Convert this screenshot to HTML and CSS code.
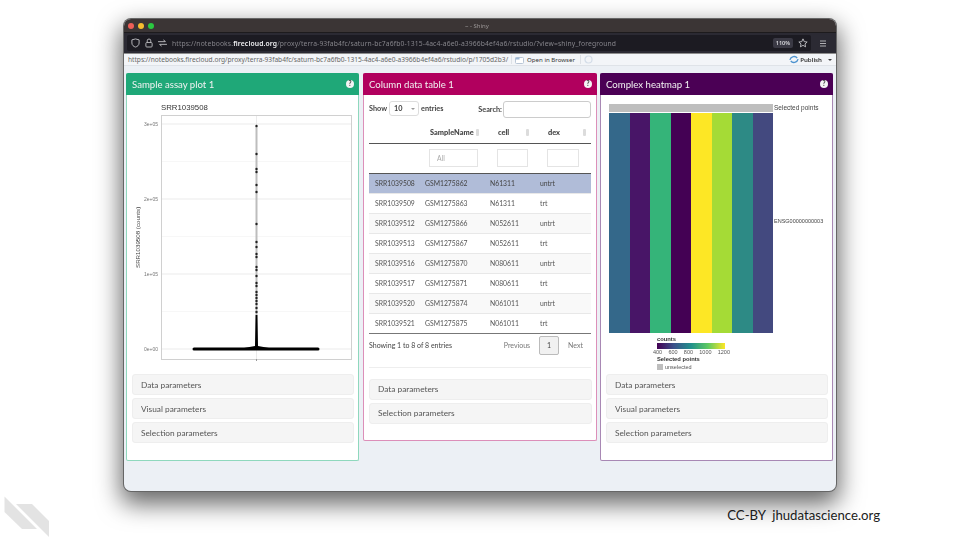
FILE: index.html
```html
<!DOCTYPE html>
<html lang="en">
<head>
    <meta charset="UTF-8">
    <meta name="viewport" content="width=device-width, initial-scale=1.0">
    <title>Shiny</title>
    <link rel="stylesheet" href="styles.css">
</head>
<body>
    <div class="window">
        <div class="titlebar">
            <span class="light red"></span>
            <span class="light yellow"></span>
            <span class="light green"></span>
            <span class="window-title">~ - Shiny</span>
        </div>
        <div class="urlbar">
            <div class="url-field">
                <svg class="nav-icon" width="9" height="10" viewBox="0 0 10 11"><path d="M5 1 L9 2 V5.5 C9 8 7 9.500 5 10 C3 9.500 1 8 1 5.500 V2 Z" fill="none" stroke="#c4c4c8" stroke-width="1"/></svg>
                <svg class="nav-icon" width="8" height="10" viewBox="0 0 9 11"><rect x="1" y="5" width="7" height="5" rx="1" fill="none" stroke="#c4c4c8"/><path d="M2.500 5 V3 A2 2 0 0 1 6.500 3 V5" fill="none" stroke="#c4c4c8"/></svg>
                <svg class="nav-icon" width="9" height="8" viewBox="0 0 10 9"><path d="M0 3 H8 M6 1 L8.500 3 M10 6 H2 M4 8 L1.500 6" fill="none" stroke="#c4c4c8"/></svg>
                <span class="url-text">https://notebooks.<b>firecloud.org</b>/proxy/terra-93fab4fc/saturn-bc7a6fb0-1315-4ac4-a6e0-a3966b4ef4a6/rstudio/?view=shiny_foreground</span>
                <span class="zoom-level">110%</span>
                <svg width="10" height="10" viewBox="0 0 12 12"><path d="M6 1 L7.500 4.400 L11 4.800 L8.400 7.100 L9.100 10.600 L6 8.800 L2.900 10.600 L3.600 7.100 L1 4.800 L4.500 4.400 Z" fill="none" stroke="#d0d0d4"/></svg>
            </div>
            <svg class="menu-icon" width="8" height="7" viewBox="0 0 8 7"><path d="M1 1 H7 M1 3.500 H7 M1 6 H7" stroke="#b0b0b4" stroke-width="1"/></svg>
        </div>
        <div class="rstudio-bar">
            <span class="rs-url">https://notebooks.firecloud.org/proxy/terra-93fab4fc/saturn-bc7a6fb0-1315-4ac4-a6e0-a3966b4ef4a6/rstudio/p/1705d2b3/</span>
            <span class="rs-sep"></span>
            <svg width="9" height="8" viewBox="0 0 9 8"><rect x="0.500" y="1.500" width="8" height="6" rx="1" fill="#fff" stroke="#b9c6d6"/><rect x="0.500" y="1.500" width="4" height="2" fill="#9db7d4"/></svg>
            <span class="rs-open">Open in Browser</span>
            <span class="rs-sep"></span>
            <svg width="9" height="9" viewBox="0 0 9 9"><circle cx="4.500" cy="4.500" r="3.500" fill="none" stroke="#d4dde8" stroke-width="1.200"/></svg>
            <span class="rs-publish">
                <svg width="10" height="9" viewBox="0 0 11 9"><path d="M1 5 C2 1 7 0 9 3 M10 4 C9 8 4 9 2 6" fill="none" stroke="#4d93cf" stroke-width="1.500"/></svg>
                Publish
                <span class="rs-caret"></span>
            </span>
        </div>

        <div class="content">
            <section class="box box-green">
                <header class="box-header">Sample assay plot 1<span class="help">?</span></header>
                <svg class="plot" width="231" height="274" viewBox="0 0 231 274">
                    <text x="34" y="14" class="plot-title">SRR1039508</text>
                    <rect x="34.500" y="19.500" width="190" height="244" fill="#fff" stroke="#d0d0d0"/>
                    <g stroke="#f2f2f2" stroke-width="0.600">
                        <line x1="35" x2="224" y1="65.500" y2="65.500"/>
                        <line x1="35" x2="224" y1="140.500" y2="140.500"/>
                        <line x1="35" x2="224" y1="215.500" y2="215.500"/>
                    </g>
                    <g stroke="#ebebeb" stroke-width="1">
                        <line x1="35" x2="224" y1="28" y2="28"/>
                        <line x1="35" x2="224" y1="103" y2="103"/>
                        <line x1="35" x2="224" y1="178" y2="178"/>
                        <line x1="35" x2="224" y1="253" y2="253"/>
                    </g>
                    <line x1="129.500" x2="129.500" y1="20" y2="263" stroke="#ebebeb"/>
                    <line x1="129.500" x2="129.500" y1="30" y2="219" stroke="#bdbdbd" stroke-width="2"/>
                    <g fill="#222">
                        <circle cx="129.500" cy="30" r="1.200"/><circle cx="129.500" cy="58" r="1.200"/>
                        <circle cx="129.500" cy="73" r="1.200"/><circle cx="129.500" cy="76" r="1.200"/>
                        <circle cx="129.500" cy="89" r="1.200"/><circle cx="129.500" cy="96" r="1.200"/>
                        <circle cx="129.500" cy="128" r="1.200"/><circle cx="129.500" cy="146" r="1.200"/>
                        <circle cx="129.500" cy="151" r="1.200"/><circle cx="129.500" cy="158" r="1.200"/>
                        <circle cx="129.500" cy="161" r="1.200"/><circle cx="129.500" cy="171" r="1.200"/>
                        <circle cx="129.500" cy="174" r="1.200"/><circle cx="129.500" cy="180" r="1.200"/>
                        <circle cx="129.500" cy="187" r="1.200"/><circle cx="129.500" cy="190" r="1.200"/>
                        <circle cx="129.500" cy="196" r="1.200"/><circle cx="129.500" cy="199" r="1.200"/>
                        <circle cx="129.500" cy="202" r="1.200"/><circle cx="129.500" cy="205" r="1.200"/>
                        <circle cx="129.500" cy="208" r="1.200"/><circle cx="129.500" cy="212" r="1.200"/>
                        <circle cx="129.500" cy="216" r="1.200"/>
                    </g>
                    <path d="M128.500 219 H130.500 L131 250 L142 252 H117 L128 250 Z" fill="#000"/>
                    <line x1="67" x2="191" y1="253" y2="253" stroke="#000" stroke-width="3" stroke-linecap="round"/>
                    <line x1="129.500" x2="129.500" y1="263" y2="265" stroke="#999"/>
                    <g class="tick-label" text-anchor="end">
                        <text x="31" y="30">3e+05</text>
                        <text x="31" y="105">2e+05</text>
                        <text x="31" y="180">1e+05</text>
                        <text x="31" y="255">0e+00</text>
                    </g>
                    <text class="axis-label" transform="translate(13 172) rotate(-90)">SRR1039508 (counts)</text>
                </svg>
                <div class="accordion">
                    <div class="acc-item">Data parameters</div>
                    <div class="acc-item">Visual parameters</div>
                    <div class="acc-item">Selection parameters</div>
                </div>
            </section>

            <section class="box box-pink">
                <header class="box-header">Column data table 1<span class="help">?</span></header>
                <div class="table-wrap">
                    <div class="table-top">
                        <span class="length">Show <span class="select-box">10<i></i></span> entries</span>
                        <span class="search">Search:<span class="search-input"></span></span>
                    </div>
                    <table class="data-table">
                        <thead>
                            <tr class="head-row">
                                <th></th>
                                <th>SampleName<i class="sort"></i></th>
                                <th>cell<i class="sort"></i></th>
                                <th>dex<i class="sort"></i></th>
                            </tr>
                            <tr class="filter-row">
                                <td></td>
                                <td><span class="filter f-sample">All</span></td>
                                <td><span class="filter f-cell"></span></td>
                                <td><span class="filter f-dex"></span></td>
                            </tr>
                        </thead>
                        <tbody>
                            <tr class="selected"><td>SRR1039508</td><td>GSM1275862</td><td>N61311</td><td>untrt</td></tr>
                            <tr><td>SRR1039509</td><td>GSM1275863</td><td>N61311</td><td>trt</td></tr>
                            <tr class="odd"><td>SRR1039512</td><td>GSM1275866</td><td>N052611</td><td>untrt</td></tr>
                            <tr><td>SRR1039513</td><td>GSM1275867</td><td>N052611</td><td>trt</td></tr>
                            <tr class="odd"><td>SRR1039516</td><td>GSM1275870</td><td>N080611</td><td>untrt</td></tr>
                            <tr><td>SRR1039517</td><td>GSM1275871</td><td>N080611</td><td>trt</td></tr>
                            <tr class="odd"><td>SRR1039520</td><td>GSM1275874</td><td>N061011</td><td>untrt</td></tr>
                            <tr><td>SRR1039521</td><td>GSM1275875</td><td>N061011</td><td>trt</td></tr>
                        </tbody>
                    </table>
                    <div class="table-foot">
                        <span class="info">Showing 1 to 8 of 8 entries</span>
                        <span class="pager">
                            <span>Previous</span>
                            <span class="page-current">1</span>
                            <span>Next</span>
                        </span>
                    </div>
                    <div class="rule"></div>
                </div>
                <div class="accordion accordion-table">
                    <div class="acc-item">Data parameters</div>
                    <div class="acc-item">Selection parameters</div>
                </div>
            </section>

            <section class="box box-purple">
                <header class="box-header">Complex heatmap 1<span class="help">?</span></header>
                <div class="heatmap">
                    <div class="heat-main">
                        <div class="selected-strip"></div>
                        <div class="heat-cols">
                            <span class="c1"></span><span class="c2"></span><span class="c3"></span><span class="c4"></span>
                            <span class="c5"></span><span class="c6"></span><span class="c7"></span><span class="c8"></span>
                        </div>
                    </div>
                    <div class="heat-labels">
                        <span>Selected points</span>
                        <span class="gene">ENSG00000000003</span>
                    </div>
                </div>
                <div class="legend">
                    <div class="legend-title">counts</div>
                    <div class="colorbar"></div>
                    <div class="legend-ticks"><span>400</span><span>600</span><span>800</span><span>1000</span><span>1200</span></div>
                    <div class="legend-title">Selected points</div>
                    <div class="legend-key"><i></i>unselected</div>
                </div>
                <div class="accordion accordion-heat">
                    <div class="acc-item">Data parameters</div>
                    <div class="acc-item">Visual parameters</div>
                    <div class="acc-item">Selection parameters</div>
                </div>
            </section>
        </div>
    </div>

    <footer class="credits">
        <svg width="46" height="42" viewBox="0 0 46 42">
            <path d="M0.500 0.500 V16 L18 33 H33 Z" fill="#e3e3e3"/>
            <path d="M12 8 H28 L45 25 V41 Z" fill="#e3e3e3"/>
        </svg>
        <span class="credit-text">CC-BY&nbsp; jhudatascience.org</span>
    </footer>
</body>
</html>
```

FILE: styles.css
```css
body {
    margin: 0;
    background-color: #fff;
    font-family: 'Lato', sans-serif;
    overflow: hidden;
}
.window {
    margin: 19px 0 0 124px;
    width: 712px;
    height: 472px;
    display: flex;
    flex-direction: column;
    border-radius: 7px;
    overflow: hidden;
    background-color: #ecf0f5;
    box-shadow: 0 0 0 1px #666, 0 10px 24px 3px rgba(0, 0, 0, 0.6);
    filter: blur(0.35px);
}
.credits {
    display: flex;
    justify-content: space-between;
    align-items: center;
    padding: 5px 80px 0 4px;
}
.credit-text {
    font-family: 'Lato', sans-serif;
    font-size: 13.200px;
    color: #222;
    margin-top: -4px;
}

/* window chrome */
.titlebar {
    height: 13px;
    flex: none;
    display: flex;
    align-items: center;
    gap: 4px;
    padding-left: 4px;
    background-color: #3b3535;
    border-bottom: 1px solid #1d1b1d;
    position: relative;
}
.light {
    width: 6px;
    height: 6px;
    border-radius: 50%;
}
.red { background-color: #ee5f58; }
.yellow { background-color: #f6bd2f; }
.green { background-color: #2ac840; }
.window-title {
    position: absolute;
    left: 341px;
    font-family: 'Noto Sans', sans-serif;
    font-size: 6px;
    color: #9b9797;
}
.urlbar {
    height: 20px;
    flex: none;
    display: flex;
    align-items: center;
    padding-left: 3px;
    background-color: #2b2a33;
}
.url-field {
    width: 684px;
    height: 16px;
    flex: none;
    display: flex;
    align-items: center;
    padding: 0 3px 0 4px;
    background-color: #1c1b22;
    box-sizing: border-box;
    border-radius: 2px;
}
.nav-icon {
    flex: none;
    margin-right: 5px;
}
.url-text {
    flex: 1;
    font-family: 'Noto Sans', sans-serif;
    font-size: 6.750px;
    color: #85848a;
    white-space: nowrap;
    letter-spacing: 0.02em;
}
.url-text b {
    color: #f0f0f2;
    font-weight: 600;
}
.zoom-level {
    padding: 1px 3px;
    margin-right: 5px;
    font-family: 'Noto Sans', sans-serif;
    font-size: 5.500px;
    font-weight: 600;
    color: #d8d8dc;
    background-color: #3a3944;
    border-radius: 2px;
}
.menu-icon {
    margin-left: 8px;
}
.rstudio-bar {
    height: 13px;
    flex: none;
    display: flex;
    align-items: center;
    gap: 3px;
    padding: 0 4px 0 4px;
    font-family: 'Noto Sans', sans-serif;
    color: #666;
    background-color: #f3f5f8;
    border-top: 1px solid #8d8d8d;
    border-bottom: 1px solid #dfe3e8;
    box-sizing: border-box;
}
.rs-url {
    font-size: 6.600px;
    white-space: nowrap;
}
.rs-sep {
    width: 1px;
    height: 9px;
    background-color: #dde1e6;
}
.rs-open {
    margin-right: 2px;
    font-size: 6.100px;
    color: #333;
}
.rs-publish {
    margin-left: auto;
    display: flex;
    align-items: center;
    gap: 1px;
    font-size: 6.100px;
    color: #333;
    font-weight: 600;
}
.rs-caret {
    margin-left: 5px;
    border-left: 2px solid transparent;
    border-right: 2px solid transparent;
    border-top: 2px solid #444;
}

/* dashboard */
.content {
    flex: 1;
    display: flex;
    align-items: flex-start;
    gap: 4px;
    padding: 7px 2px 0;
}
.box {
    width: 233px;
    flex: none;
    box-sizing: border-box;
    background-color: #fff;
    border: 1px solid;
    border-top: none;
    border-radius: 2px;
}
.box-green { height: 388px; border-color: #8fd8bd; }
.box-pink { height: 368px; width: 234px; border-color: #dc8fb9; }
.box-purple { height: 388px; border-color: #a888b4; margin-left: -1px; }
.box-header {
    height: 22px;
    margin: 0 -1px;
    padding: 0 5px 0 6px;
    display: flex;
    align-items: center;
    justify-content: space-between;
    font-size: 9.600px;
    color: #f2f2f2;
    border-radius: 2px 2px 0 0;
}
.box-green .box-header { background-color: #1fa878; }
.box-pink .box-header { background-color: #b1005e; }
.box-purple .box-header { background-color: #4b0055; }
.help {
    width: 8px;
    height: 8px;
    border-radius: 50%;
    background-color: #f4f4f4;
    color: #444;
    font-size: 6.500px;
    font-weight: 900;
    line-height: 8px;
    text-align: center;
}
.plot {
    display: block;
    margin-top: 1px;
}
.plot-title {
    font-family: 'Liberation Sans', sans-serif;
    font-size: 7.800px;
    fill: #333;
}
.tick-label {
    font-family: 'Liberation Sans', sans-serif;
    font-size: 5px;
    fill: #777;
}
.axis-label {
    font-family: 'Liberation Sans', sans-serif;
    font-size: 6.200px;
    fill: #444;
}
.accordion {
    display: flex;
    flex-direction: column;
    gap: 3px;
    margin: 4px 4px 0 5px;
}
.acc-item {
    height: 21px;
    padding-left: 8px;
    display: flex;
    align-items: center;
    font-size: 8.300px;
    color: #555;
    background-color: #f5f5f5;
    border: 1px solid #eee;
    border-radius: 3px;
    box-sizing: border-box;
}

/* table panel */
.table-wrap {
    margin: 0 5px;
    font-size: 6.800px;
    color: #444;
}
.table-top {
    height: 28px;
    display: flex;
    align-items: center;
    justify-content: space-between;
    font-size: 7.300px;
    font-weight: 700;
}
.length {
    display: flex;
    align-items: center;
    gap: 2px;
    margin-top: -1px;
}
.select-box {
    width: 30px;
    height: 15px;
    padding-left: 4px;
    display: flex;
    align-items: center;
    justify-content: space-between;
    box-sizing: border-box;
    border: 1px solid #ddd;
    border-radius: 3px;
}
.select-box i {
    margin-right: 3px;
    border-left: 2px solid transparent;
    border-right: 2px solid transparent;
    border-top: 2px solid #999;
}
.search {
    display: flex;
    align-items: center;
    gap: 1px;
}
.search-input {
    width: 88px;
    height: 17px;
    box-sizing: border-box;
    border: 1px solid #ccc;
    border-radius: 3px;
}
.data-table {
    width: 222px;
    border-collapse: collapse;
    table-layout: fixed;
}
.data-table th:nth-child(1) { width: 50px; }
.data-table th:nth-child(2) { width: 65px; }
.data-table th:nth-child(3) { width: 50px; }
.head-row th {
    height: 20px;
    padding: 0 0 0 11px;
    font-size: 7.400px;
    font-weight: 900;
    text-align: left;
    border-bottom: 1px solid #555;
    box-sizing: border-box;
    position: relative;
    white-space: nowrap;
}
.data-table th:nth-child(1) { padding: 0; }
.data-table th:nth-child(3) { padding-left: 14px; }
.data-table th:nth-child(4) { padding-left: 14px; }
.sort {
    position: absolute;
    right: 5px;
    top: 6px;
    width: 3px;
    height: 7px;
    border-radius: 1px;
    background-color: #dcdcdc;
}
.filter-row td {
    height: 30px;
    padding: 0;
    border-bottom: 1px solid #555;
    box-sizing: border-box;
}
.filter {
    display: block;
    height: 18px;
    box-sizing: border-box;
    border: 1px solid #e4e4e4;
    padding-left: 7px;
    line-height: 16px;
    color: #aaa;
}
.f-sample { margin-left: 10px; width: 49px; }
.f-cell { margin-left: 13px; width: 31px; }
.f-dex { margin-left: 13px; width: 32px; }
.data-table tbody td {
    height: 20px;
    padding: 0 0 0 6px;
    border-bottom: 1px solid #e8e8e8;
    box-sizing: border-box;
    white-space: nowrap;
    color: #555;
}
.data-table tbody tr:last-child td {
    border-bottom: 1px solid #777;
}
.data-table tr.odd td { background-color: #f9f9f9; }
.data-table tr.selected td {
    background-color: #b0bcd8;
    color: #444;
}
.table-foot {
    height: 23px;
    display: flex;
    align-items: center;
    justify-content: space-between;
}
.info {
    font-size: 7px;
}
.pager {
    display: flex;
    align-items: center;
    gap: 9px;
    padding-right: 8px;
    font-size: 7px;
    color: #777;
}
.page-current {
    width: 20px;
    height: 19px;
    display: flex;
    align-items: center;
    justify-content: center;
    box-sizing: border-box;
    border: 1px solid #bbb;
    border-radius: 2px;
    background-color: #f1f1f1;
    color: #444;
}
.rule {
    margin-top: 10px;
    height: 1px;
    background-color: #eee;
}
.accordion-table {
    margin-top: 11px;
}

/* heatmap panel */
.heatmap {
    display: flex;
    padding: 9px 0 0 8px;
    height: 238px;
    box-sizing: border-box;
}
.heat-main {
    width: 164px;
    display: flex;
    flex-direction: column;
    gap: 1px;
}
.selected-strip {
    height: 8px;
    background-color: #bebebe;
}
.heat-cols {
    flex: 1;
    display: flex;
}
.heat-cols span {
    flex: 1;
}
.c1 { background-color: #34688a; }
.c2 { background-color: #481567; }
.c3 { background-color: #35b479; }
.c4 { background-color: #440154; }
.c5 { background-color: #fde725; }
.c6 { background-color: #a5db36; }
.c7 { background-color: #2d8a85; }
.c8 { background-color: #43497f; }
.heat-labels {
    padding-left: 1px;
    font-family: 'Liberation Sans', sans-serif;
    font-size: 6.500px;
    color: #444;
    display: flex;
    flex-direction: column;
}
.heat-labels .gene {
    margin-top: 107px;
    font-size: 5.500px;
}
.legend {
    margin: 3px 0 0 56px;
    height: 38px;
    font-family: 'Liberation Sans', sans-serif;
    font-size: 5.500px;
    color: #555;
}
.legend-title {
    font-size: 5.800px;
    font-weight: 700;
    color: #333;
    line-height: 7px;
}
.colorbar {
    width: 68px;
    height: 6px;
    background: linear-gradient(to right, #440154, #3b528b, #21918c, #5ec962, #fde725);
}
.legend-ticks {
    width: 77px;
    margin-left: -4px;
    display: flex;
    justify-content: space-between;
    line-height: 7px;
}
.legend-key {
    display: flex;
    align-items: center;
    gap: 2px;
    margin-top: 1px;
    line-height: 6px;
}
.legend-key i {
    width: 6px;
    height: 6px;
    background-color: #bebebe;
}
.accordion-heat {
    margin-top: 0;
}
```
